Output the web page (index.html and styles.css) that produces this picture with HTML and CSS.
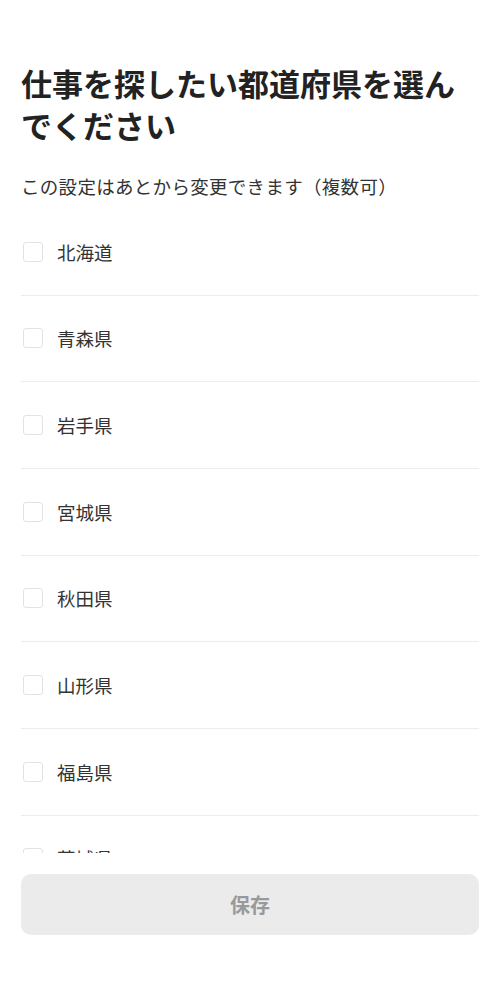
FILE: index.html
```html
<!DOCTYPE html>
<html lang="ja">
<head>
    <meta charset="UTF-8">
    <meta name="viewport" content="width=device-width, initial-scale=1.0">
    <title>都道府県を選択</title>
    <link rel="stylesheet" href="styles.css">
</head>
<body>
    <div class="page">
        <h1 class="title">仕事を探したい都道府県を選んでください</h1>
        <p class="lead">この設定はあとから変更できます（複数可）</p>

        <ul class="pref-list">
            <li class="pref-item"><span class="check"></span><span class="pref-name">北海道</span></li>
            <li class="pref-item"><span class="check"></span><span class="pref-name">青森県</span></li>
            <li class="pref-item"><span class="check"></span><span class="pref-name">岩手県</span></li>
            <li class="pref-item"><span class="check"></span><span class="pref-name">宮城県</span></li>
            <li class="pref-item"><span class="check"></span><span class="pref-name">秋田県</span></li>
            <li class="pref-item"><span class="check"></span><span class="pref-name">山形県</span></li>
            <li class="pref-item"><span class="check"></span><span class="pref-name">福島県</span></li>
            <li class="pref-item"><span class="check"></span><span class="pref-name">茨城県</span></li>
        </ul>

        <button class="save-btn" disabled>保存</button>
    </div>
</body>
</html>
```

FILE: styles.css
```css
* {
    box-sizing: border-box;
}
body {
    font-family: "Noto Sans CJK JP", "Noto Sans", sans-serif;
    margin: 0;
    background: #fff;
    color: #333;
}
.page {
    padding: 62px 21px 0;
}
.title {
    margin: 0;
    font-size: 31px;
    line-height: 42px;
    font-weight: 700;
    color: #222;
}
.lead {
    margin: 27px 0 0;
    font-size: 18.5px;
    letter-spacing: 0.3px;
    line-height: 26px;
    color: #333;
}
.pref-list {
    list-style: none;
    margin: 10px 0 0;
    padding: 0;
    height: 644px;
    overflow: hidden;
}
.pref-item {
    display: flex;
    align-items: center;
    gap: 14px;
    height: 86.67px;
    padding-left: 2px;
    border-bottom: 1px solid #ececec;
}
.check {
    width: 20px;
    height: 20px;
    border: 1px solid #e3e3e3;
    border-radius: 3px;
    background: #fff;
}
.pref-name {
    font-size: 18.5px;
    line-height: 24px;
    color: #333;
}
.save-btn {
    display: block;
    width: 100%;
    height: 61px;
    margin-top: 21px;
    border: none;
    border-radius: 10px;
    background: #ebebeb;
    color: #999;
    font-family: inherit;
    font-size: 20px;
    font-weight: 700;
}
```
